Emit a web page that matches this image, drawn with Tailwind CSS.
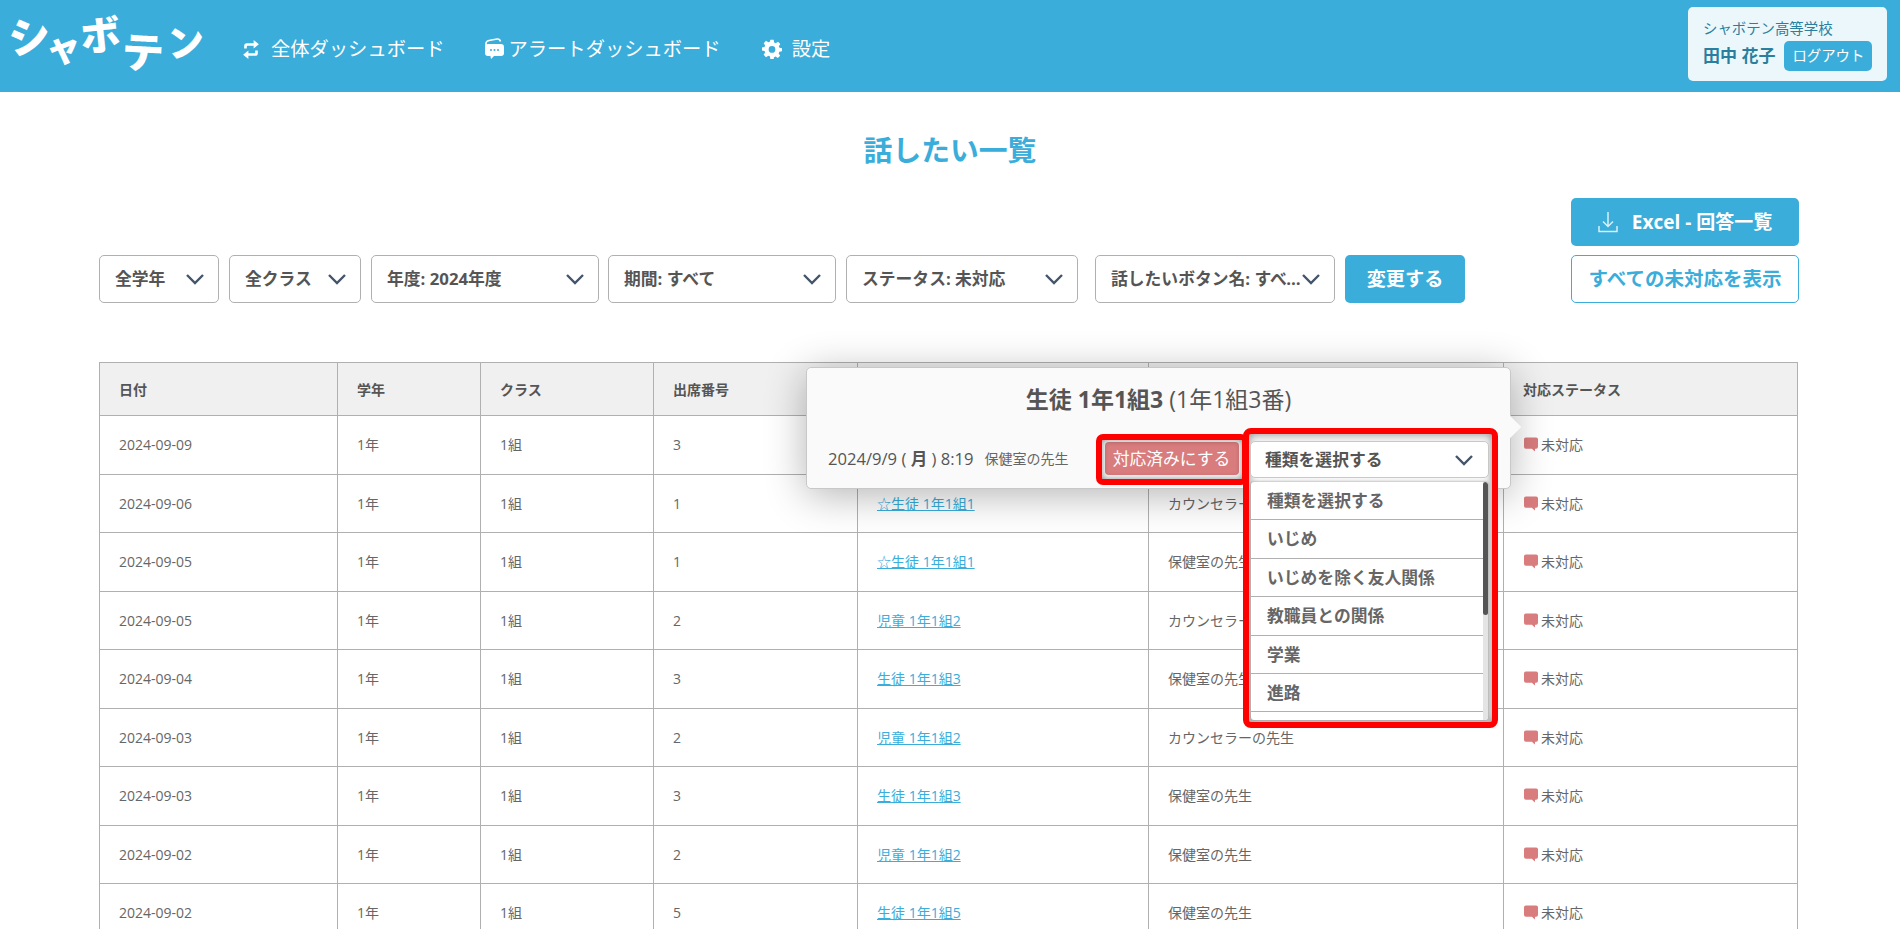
<!DOCTYPE html>
<html lang="ja">
<head>
<meta charset="utf-8">
<title>話したい一覧</title>
<script src="https://cdn.jsdelivr.net/npm/@tailwindcss/browser@4"></script>
</head>
<body class="relative h-[929px] w-[1900px] overflow-hidden bg-white font-['Open_Sans','Noto_Sans_CJK_JP',sans-serif] text-[#666]">

<header class="flex h-[92px] items-start justify-between bg-[#3aaddb] text-white">
  <div class="flex items-start">
    <div class="relative h-[92px] w-[226px] font-['Noto_Sans_CJK_JP',sans-serif] font-black leading-none">
      <span class="absolute left-[8px] top-[13px] rotate-[-8deg] text-[42px]">シ</span>
      <span class="absolute left-[45px] top-[27px] rotate-[-10deg] text-[36px]">ャ</span>
      <span class="absolute left-[80px] top-[13px] rotate-[-6deg] text-[40px]">ボ</span>
      <span class="absolute left-[122px] top-[29px] rotate-[3deg] text-[42px]">テ</span>
      <span class="absolute left-[167px] top-[22px] rotate-[-6deg] text-[37px]">ン</span>
    </div>
    <nav class="mt-[36px] flex items-center text-[19.300px] leading-[26px] font-normal">
      <a class="ml-[15px] flex items-center gap-[10px]">
        <svg class="h-[21px] w-[20px]" viewBox="0 0 19 20" fill="white"><path d="M3 9V6.500A2.500 2.500 0 0 1 5.500 4H12V1l5 4-5 4V6.500H6.500c-.6 0-1 .4-1 1V9zM16 11v2.500a2.500 2.500 0 0 1-2.500 2.500H7v3l-5-4 5-4v2.500h5.500c.6 0 1-.4 1-1V11z"/></svg>
        全体ダッシュボード
      </a>
      <a class="ml-[38px] flex items-center gap-[4px]">
        <svg class="h-[22px] w-[22px]" viewBox="0 0 22 22"><path d="M3 10V5.500C3 3.500 4 3 6 2.500L14 1c2-.3 3 .5 3.500 2.500" fill="none" stroke="white" stroke-width="1.600"/><path d="M5 6h13a3 3 0 0 1 3 3v6a3 3 0 0 1-3 3h-7l-3 3-.6-3H5a3 3 0 0 1-3-3V9a3 3 0 0 1 3-3z" fill="white"/><circle cx="8" cy="12" r="1" fill="#3aaddb"/><circle cx="11.500" cy="12" r="1" fill="#3aaddb"/><circle cx="15" cy="12" r="1" fill="#3aaddb"/></svg>
        アラートダッシュボード
      </a>
      <a class="ml-[41px] flex items-center gap-[10px]">
        <svg class="h-[20px] w-[20px]" viewBox="0 0 24 24" fill="white"><path fill-rule="evenodd" d="M10 1h4l.6 3.200 1.900.8 2.700-1.800 2.800 2.800-1.800 2.700.8 1.900L24 11.200v3.600l-3.200.6-.8 1.900 1.800 2.700-2.800 2.800-2.700-1.800-1.900.8L14 24h-4l-.6-3.200-1.900-.8-2.700 1.800L2 19l1.800-2.700-.8-1.900L0 13.800v-3.600l3-.6.8-1.900L2 5l2.800-2.800 2.700 1.800 1.900-.8zM12 8.500a4 4 0 1 0 0 8 4 4 0 0 0 0-8z"/></svg>
        設定
      </a>
    </nav>
  </div>
  <div class="mr-[13px] mt-[7px] flex h-[74px] w-[199px] flex-col rounded-[5px] bg-[#ebf7fb] pl-[15px] pt-[12px] text-[#2a7f9f]">
    <div class="text-[14.400px] leading-[20px]">シャボテン高等学校</div>
    <div class="mt-[2px] flex items-center gap-[9px]">
      <span class="text-[17px] font-bold leading-[30px]">田中 花子</span>
      <button class="h-[30px] w-[88px] rounded-[5px] bg-[#3aaddb] text-[14.400px] text-white">ログアウト</button>
    </div>
  </div>
</header>

<main class="pl-[99px] pr-[103px]">
  <h1 class="mt-[38px] pl-[4px] text-center text-[28.800px] font-bold leading-[40px] text-[#3aaddb]">話したい一覧</h1>

  <div class="-mr-[2px] mt-[28px] flex items-end justify-between">
    <div class="flex items-center text-[16.800px] font-bold text-[#555]">
      <div class="flex h-[48px] w-[120px] items-center justify-between rounded-[5px] border border-[#b0b0b0] pl-[15px] pr-[13px]">全学年
        <svg class="h-[12px] w-[20px] shrink-0" viewBox="0 0 20 12" fill="none" stroke="#44546a" stroke-width="2.400"><path d="M2 2l8 8 8-8"/></svg></div>
      <div class="ml-[10px] flex h-[48px] w-[132px] items-center justify-between rounded-[5px] border border-[#b0b0b0] pl-[15px] pr-[13px]">全クラス
        <svg class="h-[12px] w-[20px] shrink-0" viewBox="0 0 20 12" fill="none" stroke="#44546a" stroke-width="2.400"><path d="M2 2l8 8 8-8"/></svg></div>
      <div class="ml-[10px] flex h-[48px] w-[228px] items-center justify-between rounded-[5px] border border-[#b0b0b0] pl-[15px] pr-[13px]">年度: 2024年度
        <svg class="h-[12px] w-[20px] shrink-0" viewBox="0 0 20 12" fill="none" stroke="#44546a" stroke-width="2.400"><path d="M2 2l8 8 8-8"/></svg></div>
      <div class="ml-[9px] flex h-[48px] w-[228px] items-center justify-between rounded-[5px] border border-[#b0b0b0] pl-[15px] pr-[13px]">期間: すべて
        <svg class="h-[12px] w-[20px] shrink-0" viewBox="0 0 20 12" fill="none" stroke="#44546a" stroke-width="2.400"><path d="M2 2l8 8 8-8"/></svg></div>
      <div class="ml-[10px] flex h-[48px] w-[232px] items-center justify-between rounded-[5px] border border-[#b0b0b0] pl-[15px] pr-[13px]">ステータス: 未対応
        <svg class="h-[12px] w-[20px] shrink-0" viewBox="0 0 20 12" fill="none" stroke="#44546a" stroke-width="2.400"><path d="M2 2l8 8 8-8"/></svg></div>
      <div class="ml-[17px] flex h-[48px] w-[240px] items-center justify-between rounded-[5px] border border-[#b0b0b0] pl-[15px] pr-[13px]"><span class="w-[190px] truncate">話したいボタン名: すべて</span>
        <svg class="h-[12px] w-[20px] shrink-0" viewBox="0 0 20 12" fill="none" stroke="#44546a" stroke-width="2.400"><path d="M2 2l8 8 8-8"/></svg></div>
      <button class="ml-[10px] h-[48px] w-[120px] rounded-[5px] bg-[#3aaddb] text-[19.200px] font-bold text-white">変更する</button>
    </div>
    <div class="flex w-[228px] flex-col gap-[9px] font-bold">
      <button class="flex h-[48px] items-center justify-center gap-[14px] rounded-[5px] bg-[#3aaddb] text-[19px] text-white">
        <svg class="h-[22px] w-[20px]" viewBox="0 0 20 22" fill="none" stroke="#d8eff8" stroke-width="1.500"><path d="M10 1v14M5 10.500l5 5 5-5M1 15v5.500h18V15"/></svg>
        Excel - 回答一覧
      </button>
      <button class="h-[48px] rounded-[5px] border border-[#3aaddb] bg-white text-[19.500px] text-[#3aaddb]">すべての未対応を表示</button>
    </div>
  </div>

  <table class="mt-[59px] w-[1698px] table-fixed border-collapse border border-[#b0b0b0] text-[14px]">
    <colgroup><col class="w-[238px]"><col class="w-[143px]"><col class="w-[173px]"><col class="w-[204px]"><col class="w-[291px]"><col class="w-[355px]"><col class="w-[294px]"></colgroup>
    <thead class="bg-[#f0f0f0] text-left font-bold text-[#555]">
      <tr class="h-[53px]">
        <th class="border border-[#b0b0b0] pl-[19px]">日付</th><th class="border border-[#b0b0b0] pl-[19px]">学年</th><th class="border border-[#b0b0b0] pl-[19px]">クラス</th><th class="border border-[#b0b0b0] pl-[19px]">出席番号</th><th class="border border-[#b0b0b0] pl-[19px]">名前</th><th class="border border-[#b0b0b0] pl-[19px]">対応者</th><th class="border border-[#b0b0b0] pl-[19px]">対応ステータス</th>
      </tr>
    </thead>
    <tbody>
      <tr class="h-[58.500px]"><td class="border border-[#b0b0b0] pl-[19px]">2024-09-09</td><td class="border border-[#b0b0b0] pl-[19px]">1年</td><td class="border border-[#b0b0b0] pl-[19px]">1組</td><td class="border border-[#b0b0b0] pl-[19px]">3</td><td class="border border-[#b0b0b0] pl-[19px]"><a class="text-[#3aaddb] underline">生徒 1年1組3</a></td><td class="border border-[#b0b0b0] pl-[19px]">保健室の先生</td><td class="border border-[#b0b0b0] pl-[20px]"><span class="flex items-center gap-[3px]"><svg class="h-[15px] w-[14px]" viewBox="0 0 15 15" fill="#d97c7e"><path d="M2 0h11a2 2 0 0 1 2 2v8a2 2 0 0 1-2 2h-1l-.5 3-3-3H2a2 2 0 0 1-2-2V2a2 2 0 0 1 2-2z"/></svg>未対応</span></td></tr>
      <tr class="h-[58.500px]"><td class="border border-[#b0b0b0] pl-[19px]">2024-09-06</td><td class="border border-[#b0b0b0] pl-[19px]">1年</td><td class="border border-[#b0b0b0] pl-[19px]">1組</td><td class="border border-[#b0b0b0] pl-[19px]">1</td><td class="border border-[#b0b0b0] pl-[19px]"><a class="text-[#3aaddb] underline">☆生徒 1年1組1</a></td><td class="border border-[#b0b0b0] pl-[19px]">カウンセラーの先生</td><td class="border border-[#b0b0b0] pl-[20px]"><span class="flex items-center gap-[3px]"><svg class="h-[15px] w-[14px]" viewBox="0 0 15 15" fill="#d97c7e"><path d="M2 0h11a2 2 0 0 1 2 2v8a2 2 0 0 1-2 2h-1l-.5 3-3-3H2a2 2 0 0 1-2-2V2a2 2 0 0 1 2-2z"/></svg>未対応</span></td></tr>
      <tr class="h-[58.500px]"><td class="border border-[#b0b0b0] pl-[19px]">2024-09-05</td><td class="border border-[#b0b0b0] pl-[19px]">1年</td><td class="border border-[#b0b0b0] pl-[19px]">1組</td><td class="border border-[#b0b0b0] pl-[19px]">1</td><td class="border border-[#b0b0b0] pl-[19px]"><a class="text-[#3aaddb] underline">☆生徒 1年1組1</a></td><td class="border border-[#b0b0b0] pl-[19px]">保健室の先生</td><td class="border border-[#b0b0b0] pl-[20px]"><span class="flex items-center gap-[3px]"><svg class="h-[15px] w-[14px]" viewBox="0 0 15 15" fill="#d97c7e"><path d="M2 0h11a2 2 0 0 1 2 2v8a2 2 0 0 1-2 2h-1l-.5 3-3-3H2a2 2 0 0 1-2-2V2a2 2 0 0 1 2-2z"/></svg>未対応</span></td></tr>
      <tr class="h-[58.500px]"><td class="border border-[#b0b0b0] pl-[19px]">2024-09-05</td><td class="border border-[#b0b0b0] pl-[19px]">1年</td><td class="border border-[#b0b0b0] pl-[19px]">1組</td><td class="border border-[#b0b0b0] pl-[19px]">2</td><td class="border border-[#b0b0b0] pl-[19px]"><a class="text-[#3aaddb] underline">児童 1年1組2</a></td><td class="border border-[#b0b0b0] pl-[19px]">カウンセラーの先生</td><td class="border border-[#b0b0b0] pl-[20px]"><span class="flex items-center gap-[3px]"><svg class="h-[15px] w-[14px]" viewBox="0 0 15 15" fill="#d97c7e"><path d="M2 0h11a2 2 0 0 1 2 2v8a2 2 0 0 1-2 2h-1l-.5 3-3-3H2a2 2 0 0 1-2-2V2a2 2 0 0 1 2-2z"/></svg>未対応</span></td></tr>
      <tr class="h-[58.500px]"><td class="border border-[#b0b0b0] pl-[19px]">2024-09-04</td><td class="border border-[#b0b0b0] pl-[19px]">1年</td><td class="border border-[#b0b0b0] pl-[19px]">1組</td><td class="border border-[#b0b0b0] pl-[19px]">3</td><td class="border border-[#b0b0b0] pl-[19px]"><a class="text-[#3aaddb] underline">生徒 1年1組3</a></td><td class="border border-[#b0b0b0] pl-[19px]">保健室の先生</td><td class="border border-[#b0b0b0] pl-[20px]"><span class="flex items-center gap-[3px]"><svg class="h-[15px] w-[14px]" viewBox="0 0 15 15" fill="#d97c7e"><path d="M2 0h11a2 2 0 0 1 2 2v8a2 2 0 0 1-2 2h-1l-.5 3-3-3H2a2 2 0 0 1-2-2V2a2 2 0 0 1 2-2z"/></svg>未対応</span></td></tr>
      <tr class="h-[58.500px]"><td class="border border-[#b0b0b0] pl-[19px]">2024-09-03</td><td class="border border-[#b0b0b0] pl-[19px]">1年</td><td class="border border-[#b0b0b0] pl-[19px]">1組</td><td class="border border-[#b0b0b0] pl-[19px]">2</td><td class="border border-[#b0b0b0] pl-[19px]"><a class="text-[#3aaddb] underline">児童 1年1組2</a></td><td class="border border-[#b0b0b0] pl-[19px]">カウンセラーの先生</td><td class="border border-[#b0b0b0] pl-[20px]"><span class="flex items-center gap-[3px]"><svg class="h-[15px] w-[14px]" viewBox="0 0 15 15" fill="#d97c7e"><path d="M2 0h11a2 2 0 0 1 2 2v8a2 2 0 0 1-2 2h-1l-.5 3-3-3H2a2 2 0 0 1-2-2V2a2 2 0 0 1 2-2z"/></svg>未対応</span></td></tr>
      <tr class="h-[58.500px]"><td class="border border-[#b0b0b0] pl-[19px]">2024-09-03</td><td class="border border-[#b0b0b0] pl-[19px]">1年</td><td class="border border-[#b0b0b0] pl-[19px]">1組</td><td class="border border-[#b0b0b0] pl-[19px]">3</td><td class="border border-[#b0b0b0] pl-[19px]"><a class="text-[#3aaddb] underline">生徒 1年1組3</a></td><td class="border border-[#b0b0b0] pl-[19px]">保健室の先生</td><td class="border border-[#b0b0b0] pl-[20px]"><span class="flex items-center gap-[3px]"><svg class="h-[15px] w-[14px]" viewBox="0 0 15 15" fill="#d97c7e"><path d="M2 0h11a2 2 0 0 1 2 2v8a2 2 0 0 1-2 2h-1l-.5 3-3-3H2a2 2 0 0 1-2-2V2a2 2 0 0 1 2-2z"/></svg>未対応</span></td></tr>
      <tr class="h-[58.500px]"><td class="border border-[#b0b0b0] pl-[19px]">2024-09-02</td><td class="border border-[#b0b0b0] pl-[19px]">1年</td><td class="border border-[#b0b0b0] pl-[19px]">1組</td><td class="border border-[#b0b0b0] pl-[19px]">2</td><td class="border border-[#b0b0b0] pl-[19px]"><a class="text-[#3aaddb] underline">児童 1年1組2</a></td><td class="border border-[#b0b0b0] pl-[19px]">保健室の先生</td><td class="border border-[#b0b0b0] pl-[20px]"><span class="flex items-center gap-[3px]"><svg class="h-[15px] w-[14px]" viewBox="0 0 15 15" fill="#d97c7e"><path d="M2 0h11a2 2 0 0 1 2 2v8a2 2 0 0 1-2 2h-1l-.5 3-3-3H2a2 2 0 0 1-2-2V2a2 2 0 0 1 2-2z"/></svg>未対応</span></td></tr>
      <tr class="h-[58.500px]"><td class="border border-[#b0b0b0] pl-[19px]">2024-09-02</td><td class="border border-[#b0b0b0] pl-[19px]">1年</td><td class="border border-[#b0b0b0] pl-[19px]">1組</td><td class="border border-[#b0b0b0] pl-[19px]">5</td><td class="border border-[#b0b0b0] pl-[19px]"><a class="text-[#3aaddb] underline">生徒 1年1組5</a></td><td class="border border-[#b0b0b0] pl-[19px]">保健室の先生</td><td class="border border-[#b0b0b0] pl-[20px]"><span class="flex items-center gap-[3px]"><svg class="h-[15px] w-[14px]" viewBox="0 0 15 15" fill="#d97c7e"><path d="M2 0h11a2 2 0 0 1 2 2v8a2 2 0 0 1-2 2h-1l-.5 3-3-3H2a2 2 0 0 1-2-2V2a2 2 0 0 1 2-2z"/></svg>未対応</span></td></tr>
    </tbody>
  </table>
</main>

<!-- popover -->
<div class="absolute left-[806px] top-[367px] h-[122px] w-[705px] rounded-[5px] border border-[#c8c8c8] bg-[#fafafa] shadow-[0_6px_40px_rgba(0,0,0,0.3)]">
  <span class="absolute -right-[8px] top-[51px] h-[16px] w-[16px] rotate-45 bg-[#fafafa]"></span>
  <div class="pt-[15px] text-center text-[23px] leading-[32px] text-[#555]"><b>生徒 1年1組3</b> (1年1組3番)</div>
  <div class="mt-[27px] flex items-center pl-[21px] leading-[33px]">
    <span class="shrink-0 text-[16.600px] text-[#555]">2024/9/9 ( <b>月</b> ) 8:19</span>
    <span class="ml-[11px] shrink-0 text-[14px]">保健室の先生</span>
    <button class="ml-[36px] h-[33px] w-[134px] shrink-0 rounded-[4px] bg-[#d97c7e] text-[16.800px] text-white">対応済みにする</button>
  </div>
</div>

<!-- annotations and open select -->
<div class="absolute left-[1096px] top-[434px] h-[51px] w-[152px] rounded-[7px] border-[6px] border-[#ff0000] shadow-[inset_0_0_6px_rgba(0,0,0,0.45)]"></div>
<div class="absolute left-[1243px] top-[428px] h-[300px] w-[255px] rounded-[8px] border-[6px] border-[#ff0000] bg-[#f6f6f6] shadow-[inset_0_0_8px_rgba(0,0,0,0.45)]">
  <div class="absolute left-[1px] top-[7px] flex h-[37px] w-[239px] items-center justify-between rounded-[5px] border border-[#c8c8c8] bg-white pl-[14px] pr-[14px] text-[16.800px] font-bold text-[#555]">種類を選択する
    <svg class="h-[12px] w-[20px] shrink-0" viewBox="0 0 20 12" fill="none" stroke="#44546a" stroke-width="2.400"><path d="M2 2l8 8 8-8"/></svg>
  </div>
  <div class="absolute left-[2px] top-[48px] flex h-[238px] w-[237px] overflow-hidden rounded-[3px] bg-white text-[16.800px] font-bold text-[#666] shadow-[0_0_3px_rgba(0,0,0,0.4)]">
    <ul class="w-[232px]">
      <li class="flex h-[38.400px] items-center border-b border-[#b0b0b0] pl-[16px]">種類を選択する</li>
      <li class="flex h-[38.400px] items-center border-b border-[#b0b0b0] pl-[16px]">いじめ</li>
      <li class="flex h-[38.400px] items-center border-b border-[#b0b0b0] pl-[16px]">いじめを除く友人関係</li>
      <li class="flex h-[38.400px] items-center border-b border-[#b0b0b0] pl-[16px]">教職員との関係</li>
      <li class="flex h-[38.400px] items-center border-b border-[#b0b0b0] pl-[16px]">学業</li>
      <li class="flex h-[38.400px] items-center border-b border-[#b0b0b0] pl-[16px]">進路</li>
    </ul>
    <div class="relative w-[5px] bg-[#e4e4e4]"><span class="absolute top-0 block h-[133px] w-[5px] rounded-[3px] bg-[#555]"></span></div>
  </div>
</div>
</body>
</html>
